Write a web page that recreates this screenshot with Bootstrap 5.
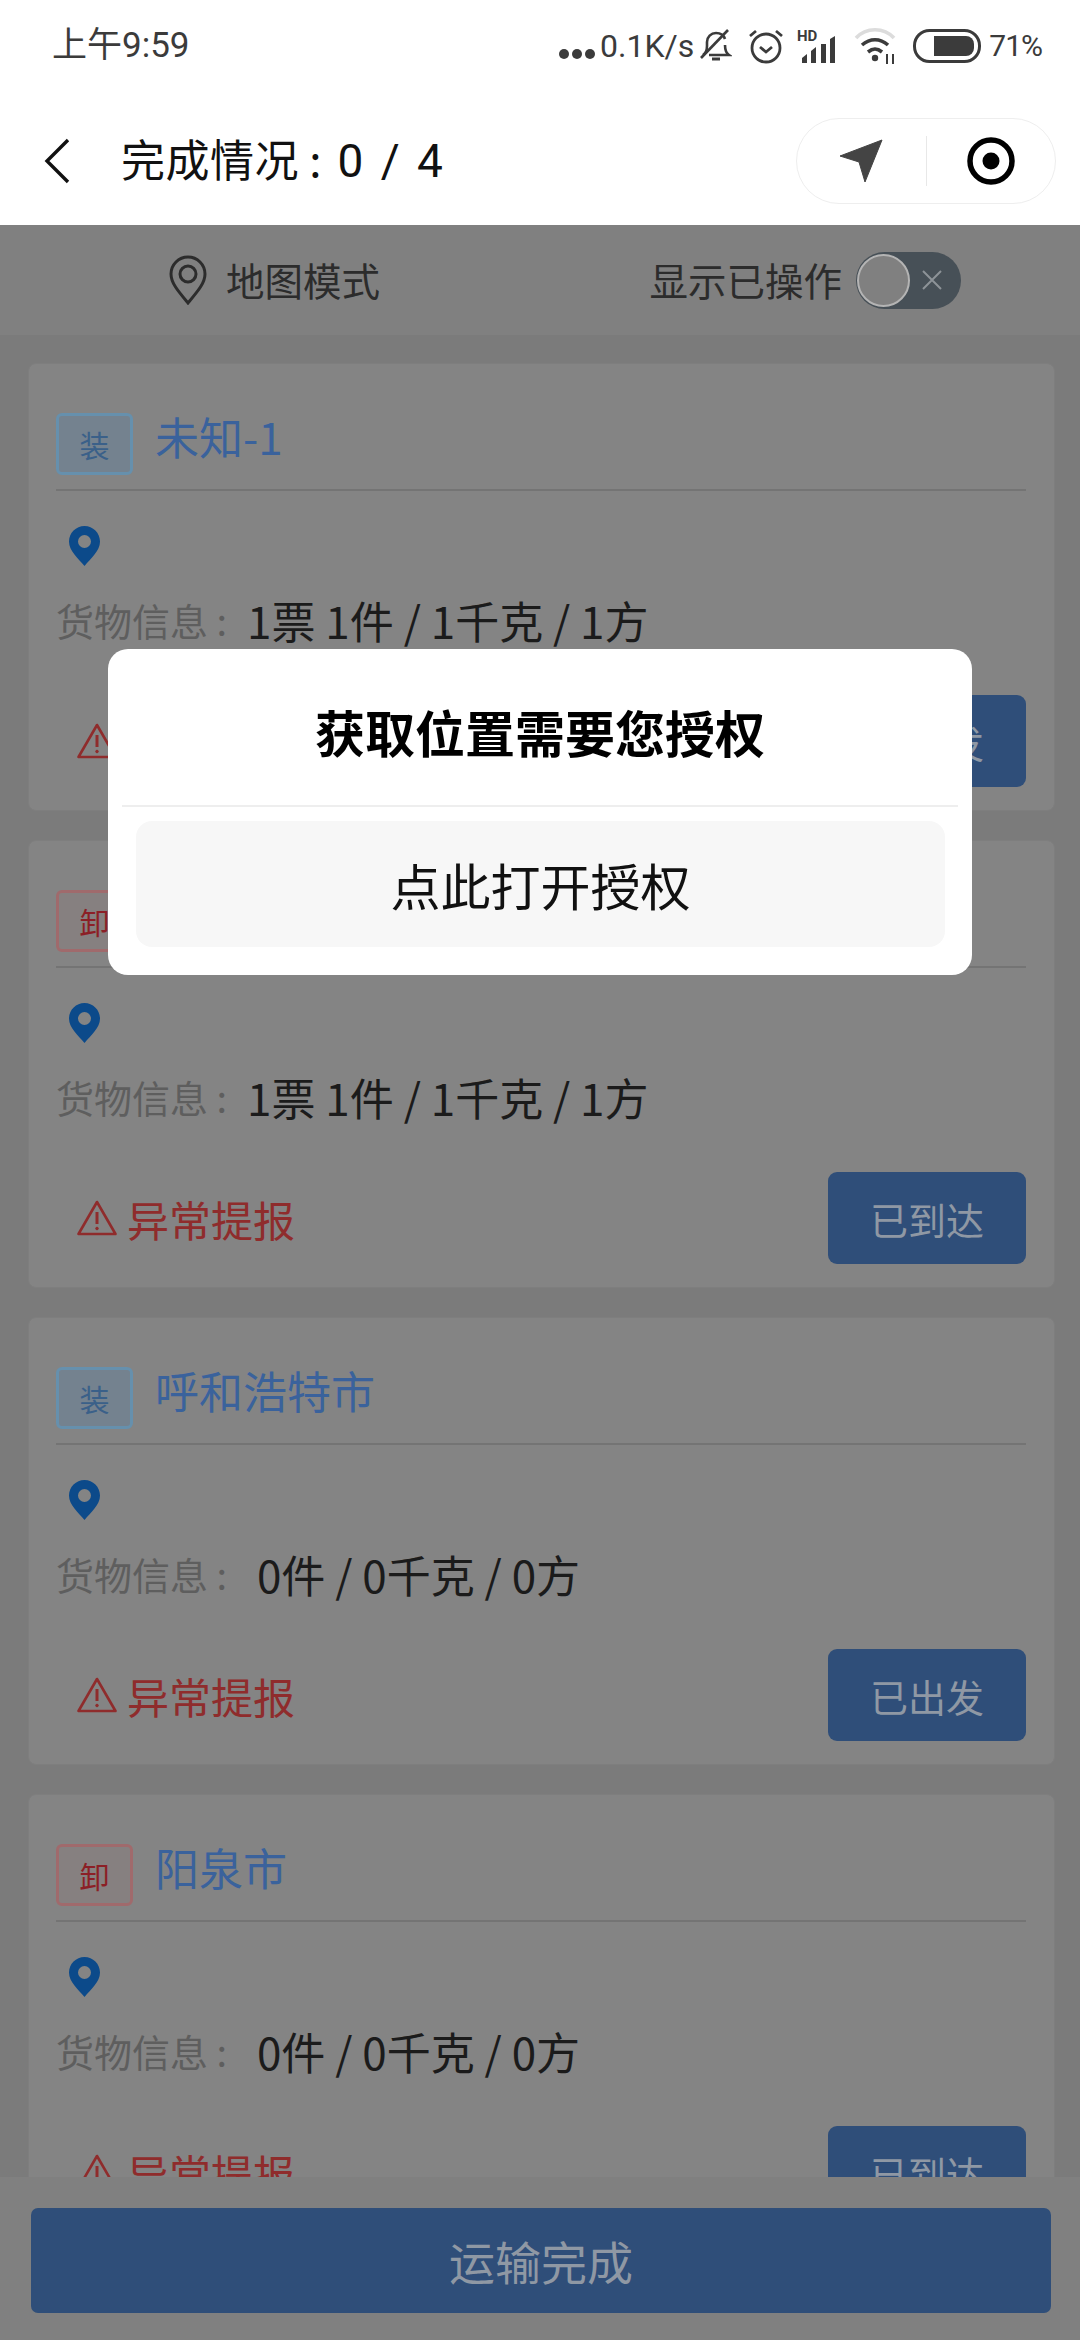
<!DOCTYPE html>
<html lang="zh-CN">
<head>
    <meta charset="UTF-8">
    <meta name="viewport" content="width=device-width, initial-scale=1">
    <title>完成情况</title>
    <link href="https://cdn.jsdelivr.net/npm/bootstrap@5.3.3/dist/css/bootstrap.min.css" rel="stylesheet">
    <script src="https://cdn.jsdelivr.net/npm/bootstrap@5.3.3/dist/js/bootstrap.bundle.min.js"></script>
    <style>
        /* the page sits behind a dimmed layer, so these are the dimmed colours */
        :root {
            --page-bg: #7b7b7b;
            --panel-bg: #808080;
            --item-bg: #848484;
            --line: #747474;
            --title-blue: #3a629c;
            --btn-blue: #2f4e79;
            --btn-text: #8f98a4;
            --warn-red: #8f2c2c;
        }

        html, body {
            height: 100%;
        }

        body {
            width: 1080px;
            height: 2340px;
            overflow: hidden;
            font-family: "Noto Sans CJK SC", "Noto Sans", sans-serif;
            background-color: var(--page-bg);
        }

        .status-bar {
            height: 66px;
            padding: 26px 38px 0 52px;
            color: #3b3b3b;
            font-family: Roboto, "Noto Sans CJK SC", sans-serif;
        }

        .status-time {
            font-size: 35px;
            line-height: 40px;
        }

        .status-speed {
            font-size: 32px;
            line-height: 40px;
        }

        .status-level {
            font-size: 30px;
            line-height: 40px;
            letter-spacing: -1px;
            margin-left: 8px;
        }

        .status-icons {
            height: 40px;
        }

        .ico-bell {
            margin-left: 6px;
        }

        .ico-alarm {
            margin-left: 16px;
        }

        .ico-signal {
            margin-left: 13px;
        }

        .ico-wifi {
            margin-left: 15px;
        }

        .ico-battery {
            margin-left: 15px;
        }

        .top-bar {
            height: 159px;
            padding: 30px 24px 0 44px;
        }

        .top-title {
            font-size: 44px;
            color: #111;
            margin-left: 50px;
            letter-spacing: 0.5px;
        }

        .top-count {
            font-size: 46px;
            letter-spacing: 3px;
            margin-left: 5px;
            font-family: Roboto, sans-serif;
        }

        .capsule {
            width: 260px;
            height: 86px;
            border: 1px solid #eee;
            border-radius: 43px;
        }

        .capsule-cell {
            width: 129px;
        }

        .capsule-line {
            width: 1px;
            height: 50px;
            background-color: #e8e8e8;
        }

        .screen-body {
            height: 2115px;
        }

        .filter-bar {
            height: 110px;
            background-color: var(--panel-bg);
            color: #2c2c2c;
            font-size: 38.500px;
            padding: 0 119px 0 168px;
        }

        .map-label {
            margin-left: 2px;
        }

        .toggle-track {
            width: 105px;
            height: 57px;
            border-radius: 29px;
            background-color: #475057;
            margin-left: 14px;
        }

        .toggle-knob {
            left: 1px;
            top: 2px;
            width: 53px;
            height: 53px;
            border-radius: 50%;
            background-color: #808080;
            border: 2px solid #b4b4b4;
        }

        .toggle-x {
            left: 66px;
            top: 18px;
        }

        .job-list {
            padding: 28px 25px 0 28px;
            gap: 29px;
            overflow: hidden;
        }

        .job-item {
            height: 448px;
            flex-shrink: 0;
            background-color: var(--item-bg);
            border: 1px solid #7e7e7e;
            border-radius: 8px;
            padding: 49px 28px 0 27px;
        }

        .job-head {
            height: 78px;
            border-bottom: 2px solid var(--line);
        }

        .job-tag {
            width: 77px;
            height: 62px;
            border-radius: 6px;
            font-size: 30px;
            border: 3px solid;
        }

        .tag-load {
            color: #3a6089;
            border-color: #6690ad;
            background-color: #74828f;
        }

        .tag-unload {
            color: #8c1f26;
            border-color: #a06a6c;
            background-color: #868080;
        }

        .job-name {
            font-size: 44px;
            line-height: 62px;
            color: var(--title-blue);
            margin-left: 22px;
            margin-top: -8px;
        }

        .pin-row {
            height: 76px;
            padding: 35px 0 0 13px;
            box-sizing: content-box;
        }

        .info-row {
            line-height: 56px;
            margin-top: -10px;
            white-space: pre;
        }

        .info-label {
            color: #5e5e5e;
            font-size: 38px;
        }

        .info-value {
            color: #1b1b1b;
            font-size: 44px;
            margin-left: 20px;
        }

        .job-foot {
            margin-top: 47px;
        }

        .warn-link {
            font-size: 42px;
            color: var(--warn-red);
            padding-left: 21px;
            gap: 10px;
        }

        .go-btn {
            width: 198px;
            height: 92px;
            border: 0;
            border-radius: 9px;
            font-size: 38px;
            padding: 0;
            background-color: var(--btn-blue);
            color: var(--btn-text);
        }

        .bottom-bar {
            height: 163px;
            padding: 31px 29px 0 31px;
            background-color: var(--panel-bg);
        }

        .finish-btn {
            height: 105px;
            border: 0;
            border-radius: 7px;
            font-size: 46px;
            background-color: var(--btn-blue);
            color: var(--btn-text);
        }

        .auth-dialog {
            left: 108px;
            top: 424px;
            width: 864px;
            height: 326px;
            background-color: #fff;
            border-radius: 20px;
            padding: 0 14px;
        }

        .auth-title {
            height: 158px;
            padding-top: 8px;
            border-bottom: 2px solid #eee;
            font-size: 50px;
            font-weight: 700;
            color: #000;
        }

        .auth-open {
            width: 809px;
            height: 126px;
            margin: 14px 0 0 14px;
            background-color: #f7f7f7;
            border-radius: 16px;
            border: 0;
            font-size: 50px;
            color: #111;
            padding: 0;
        }
    </style>
</head>
<body class="d-flex flex-column">
    <div class="bg-white">
        <div class="status-bar d-flex justify-content-between">
            <div class="status-time">上午9:59</div>
            <div class="status-icons d-flex align-items-center">
                <svg width="38" height="12" viewBox="0 0 38 12" fill="#3b3b3b" class="mt-3"><circle cx="6" cy="6" r="5"/><circle cx="19" cy="6" r="5"/><circle cx="32" cy="6" r="5"/></svg>
                <span class="status-speed ms-1">0.1K/s</span>
                <svg width="32" height="36" viewBox="0 0 32 36" fill="none" stroke="#3b3b3b" stroke-width="2.6" class="ico-bell"><path d="M3 27c3-2 4-5 4-9v-4c0-5 4-9 9-9s8 3 9 6M25 17c0 5 1 8 4 10H9"/><path d="M1 30 28 2"/><path d="M12 31h8" stroke-width="3"/></svg>
                <svg width="36" height="38" viewBox="0 0 36 38" fill="none" stroke="#3b3b3b" stroke-width="2.8" class="ico-alarm"><circle cx="18" cy="21" r="14"/><path d="M12 20l6 5 6-5"/><path d="M2 9l6-5M34 9l-6-5"/></svg>
                <svg width="42" height="36" viewBox="0 0 42 36" class="ico-signal"><text x="0" y="13" font-family="Roboto" font-size="15" font-weight="700" fill="#3b3b3b">HD</text><path fill="#3b3b3b" d="M2 30l5-4v9H2zM11 23l5-4v16h-5zM21 16h5v19h-5zM30 11l5-3v27h-5z" transform="translate(3 0)"/></svg>
                <svg width="44" height="40" viewBox="0 0 44 40" fill="none" stroke-width="3.6" class="ico-wifi"><path d="M2 12C12 1 30 1 40 12" stroke="#dcdcdc"/><path d="M8 19c8-7 18-7 26 0" stroke="#3b3b3b"/><path d="M14 26c5-4 9-4 14 0" stroke="#3b3b3b"/><circle cx="21" cy="32" r="3.2" fill="#3b3b3b" stroke="none"/><path d="M33 28v10M39 28v10" stroke="#3b3b3b" stroke-width="2"/></svg>
                <svg width="68" height="34" viewBox="0 0 68 34" class="ico-battery"><rect x="1.5" y="1.5" width="65" height="31" rx="15" fill="none" stroke="#3b3b3b" stroke-width="3"/><path fill="#3b3b3b" d="M21 7h32a8 8 0 0 1 8 8v4a8 8 0 0 1-8 8H21z"/></svg>
                <span class="status-level">71%</span>
            </div>
        </div>
        <div class="top-bar d-flex align-items-center">
            <svg width="27" height="46" viewBox="0 0 27 46" fill="none" stroke="#111" stroke-width="3.4"><path d="M24 2 3 23l21 21"/></svg>
            <div class="top-title flex-grow-1">完成情况 : <span class="top-count">0 / 4</span></div>
            <div class="capsule d-flex align-items-center">
                <div class="capsule-cell d-flex justify-content-center">
                    <svg width="44" height="44" viewBox="0 0 44 44" fill="#444"><path d="M43 1 26 43l-6-20L1 17z" stroke="#444" stroke-width="1" stroke-linejoin="round"/></svg>
                </div>
                <div class="capsule-line"></div>
                <div class="capsule-cell d-flex justify-content-center">
                    <svg width="48" height="48" viewBox="0 0 48 48"><circle cx="24" cy="24" r="21" fill="none" stroke="#000" stroke-width="5.5"/><circle cx="24" cy="24" r="8.5" fill="#000"/></svg>
                </div>
            </div>
        </div>
    </div>

    <div class="screen-body position-relative d-flex flex-column">
        <div class="filter-bar d-flex align-items-center justify-content-between flex-shrink-0">
            <div class="d-flex align-items-center gap-3">
                <svg width="40" height="50" viewBox="0 0 40 50" fill="none" stroke="#2c2c2c" stroke-width="3"><path d="M20 48C10 36 3 28 3 19a17 17 0 0 1 34 0c0 9-7 17-17 29z"/><circle cx="20" cy="19" r="8"/></svg>
                <span class="map-label">地图模式</span>
            </div>
            <div class="d-flex align-items-center">
                <span>显示已操作</span>
                <div class="toggle-track position-relative">
                    <div class="toggle-knob position-absolute"></div>
                    <svg class="toggle-x position-absolute" width="20" height="20" viewBox="0 0 20 20" stroke="#8d9398" stroke-width="2"><path d="M1 1l18 18M19 1 1 19"/></svg>
                </div>
            </div>
        </div>

        <div class="job-list d-flex flex-column flex-grow-1" id="jobList"></div>

        <div class="bottom-bar flex-shrink-0">
            <button class="btn finish-btn w-100">运输完成</button>
        </div>

        <div class="auth-dialog position-absolute">
            <div class="auth-title d-flex align-items-center justify-content-center">获取位置需要您授权</div>
            <button class="btn auth-open d-block">点此打开授权</button>
        </div>
    </div>

    <script>
        const jobs = [
            { type: "装", name: "未知-1", cargo: "1票 1件 / 1千克 / 1方", action: "已出发" },
            { type: "卸", name: "未知-1", cargo: "1票 1件 / 1千克 / 1方", action: "已到达" },
            { type: "装", name: "呼和浩特市", cargo: " 0件 / 0千克 / 0方", action: "已出发" },
            { type: "卸", name: "阳泉市", cargo: " 0件 / 0千克 / 0方", action: "已到达" }
        ];

        const list = document.getElementById("jobList");
        jobs.forEach((job) => {
            const tagClass = job.type === "装" ? "tag-load" : "tag-unload";
            list.innerHTML += `
                <div class="card job-item">
                    <div class="job-head d-flex">
                        <div class="job-tag ${tagClass} d-flex align-items-center justify-content-center">${job.type}</div>
                        <div class="job-name">${job.name}</div>
                    </div>
                    <div class="pin-row">
                        <svg class="d-block" width="31" height="40" viewBox="0 0 31 40"><path fill="#0c4a8a" fill-rule="evenodd" d="M15.500 0C7 0 0 7 0 15.500 0 25 9 32 15.500 40 22 32 31 25 31 15.500 31 7 24 0 15.500 0zm0 9a6.500 6.500 0 1 1 0 13 6.500 6.500 0 0 1 0-13z"/></svg>
                    </div>
                    <div class="info-row d-flex align-items-center">
                        <span class="info-label">货物信息 :</span>
                        <span class="info-value">${job.cargo}</span>
                    </div>
                    <div class="job-foot d-flex justify-content-between align-items-center">
                        <div class="warn-link d-flex align-items-center">
                            <svg width="40" height="36" viewBox="0 0 40 36" fill="none" stroke="#8f2c2c" stroke-width="2.6" stroke-linejoin="round"><path d="M20 2 38.500 34H1.500z"/><path d="M20 12v12" stroke-width="3"/><circle cx="20" cy="28.500" r="1.300" fill="#8f2c2c" stroke-width="1"/></svg>
                            <span>异常提报</span>
                        </div>
                        <button class="btn go-btn">${job.action}</button>
                    </div>
                </div>`;
        });
    </script>
</body>
</html>
